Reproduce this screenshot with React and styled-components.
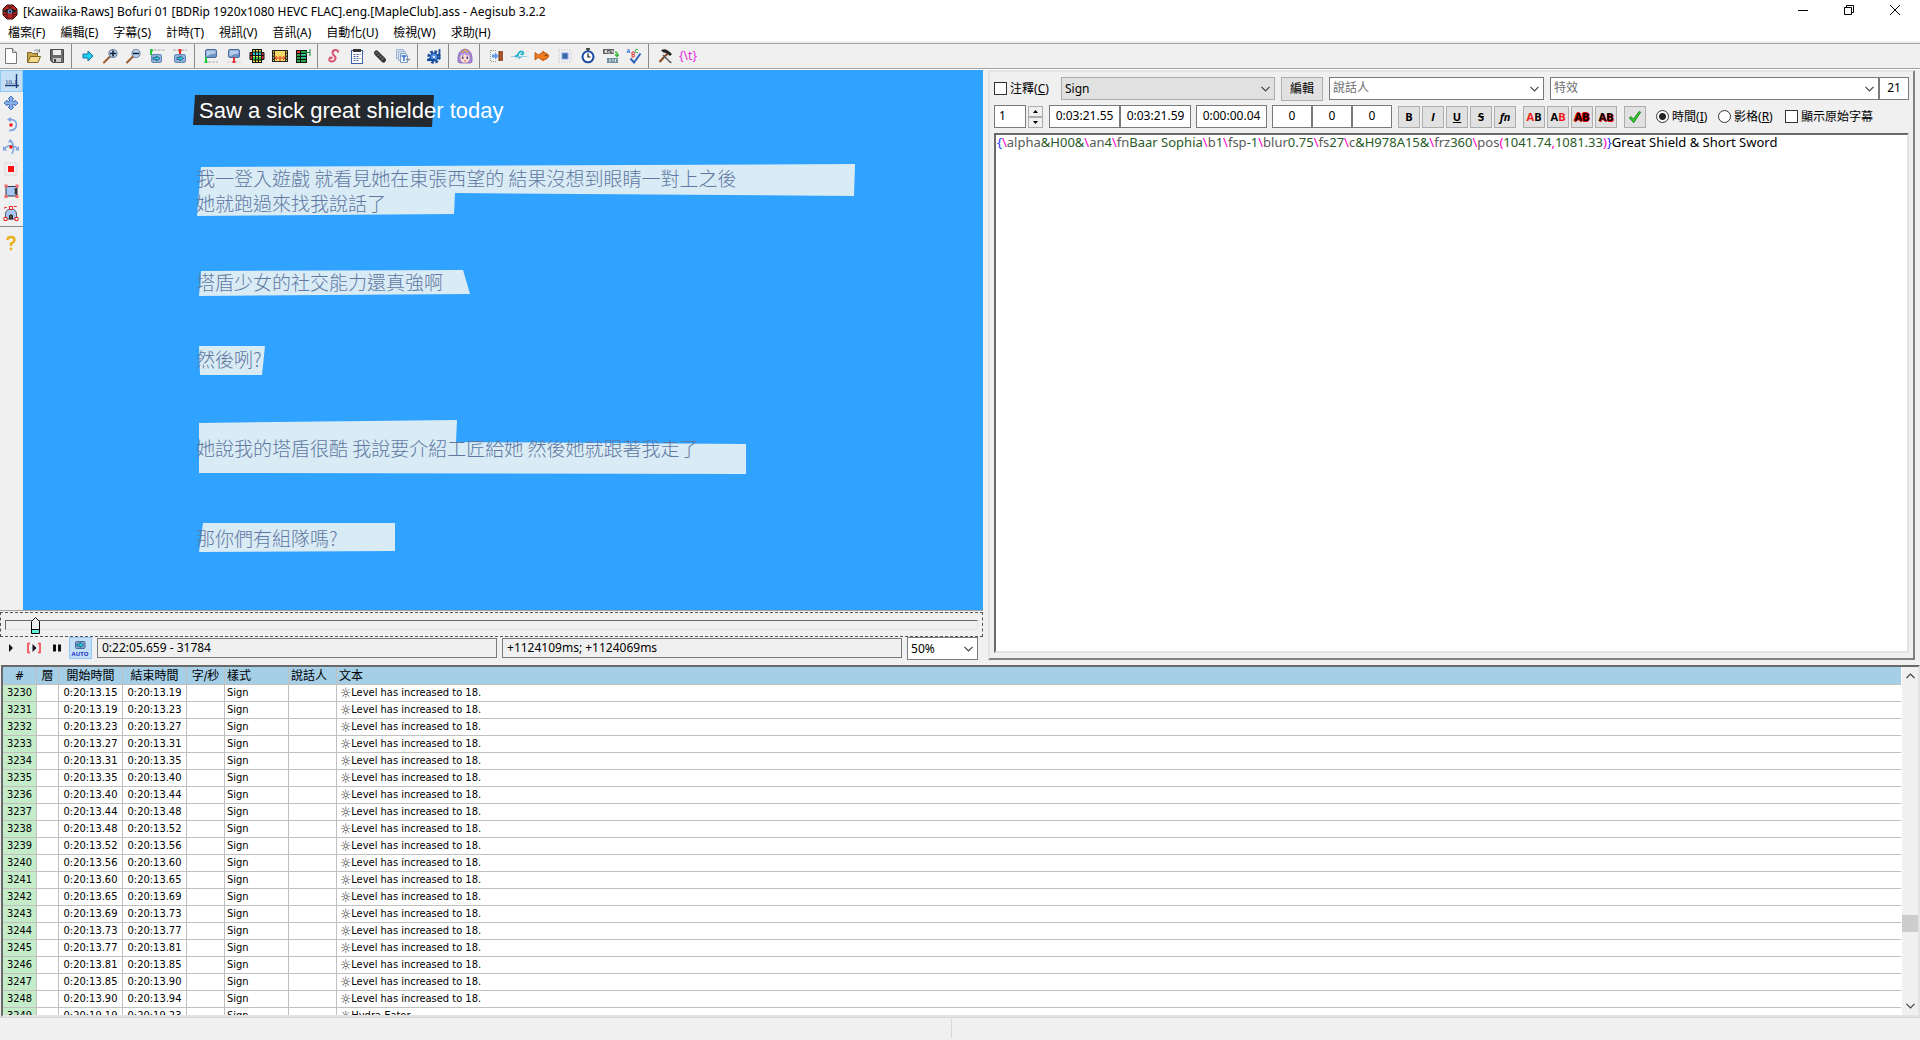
import React from "react";
import styled, { createGlobalStyle, css } from "styled-components";

const uiFont = `"Noto Sans", "Noto Sans CJK TC", sans-serif`;
const gridFont = `"DejaVu Sans Condensed", "DejaVu Sans", "Noto Sans CJK TC", sans-serif`;

const menus = ["檔案(F)", "編輯(E)", "字幕(S)", "計時(T)", "視訊(V)", "音訊(A)", "自動化(U)", "檢視(W)", "求助(H)"];

const mainTools = [
  ["new", "open", "save"],
  ["jump", "zoomIn", "zoomOut", "jumpStart", "jumpEnd"],
  ["videoStart", "videoEnd", "snapScene", "shiftFrame", "selectVisible"],
  ["styles", "properties", "attach", "fonts"],
  ["automation"],
  ["assistant"],
  ["shift", "wave", "fish", "resample", "timing", "kanji", "spell"],
  ["options", "tags"],
];

const visualTools = ["cross", "drag", "rotateZ", "rotateXY", "scale", "clip", "vectorClip"];

const times = [
  "13.15", "13.19", "13.23", "13.27", "13.31", "13.35", "13.40", "13.44", "13.48", "13.52",
  "13.56", "13.60", "13.65", "13.69", "13.73", "13.77", "13.81", "13.85", "13.90", "13.94",
];

const lines = times.slice(0, -1).map((t, i) => ({
  num: 3230 + i,
  start: `0:20:${t}`,
  end: `0:20:${times[i + 1]}`,
  style: "Sign",
  text: "Level has increased to 18.",
}));
lines.push({ num: 3249, start: "0:20:19.19", end: "0:20:19.23", style: "Sign", text: "Hydra Eater" });

const overrideTags = [
  ["brace", "{"],
  ["slash", "\\"], ["tag", "alpha"], ["arg", "&H00&"],
  ["slash", "\\"], ["tag", "an"], ["arg", "4"],
  ["slash", "\\"], ["tag", "fn"], ["arg", "Baar Sophia"],
  ["slash", "\\"], ["tag", "b"], ["arg", "1"],
  ["slash", "\\"], ["tag", "fsp"], ["arg", "-1"],
  ["slash", "\\"], ["tag", "blur"], ["arg", "0.75"],
  ["slash", "\\"], ["tag", "fs"], ["arg", "27"],
  ["slash", "\\"], ["tag", "c"], ["arg", "&H978A15&"],
  ["slash", "\\"], ["tag", "frz"], ["arg", "360"],
  ["slash", "\\"], ["tag", "pos"], ["slash", "("], ["arg", "1041.74"], ["slash", ","], ["arg", "1081.33"], ["slash", ")"],
  ["brace", "}"],
  ["plain", "Great Shield & Short Sword"],
];

const Screen = ({ x = 2, y = 3 }) => (
  <g>
    <rect x={x} y={y} width="11" height="8" rx="1.5" fill="#6f93c4" stroke="#456a9d" />
    <path d={`M${x + 1} ${y + 1}h9v3q-5 0-9 3z`} fill="#b5cdea" />
  </g>
);

const icons = {
  new: (
    <g>
      <path d="M2.5 .5h7l4 4v11h-11z" fill="#fff" stroke="#777" />
      <path d="M9.5 .5v4h4" fill="#ddd" stroke="#777" />
    </g>
  ),
  open: (
    <g>
      <path d="M1.5 14V4.5h4l1 1h5v3" fill="#c9a64b" stroke="#7d6626" />
      <path d="M1.5 14.5l3-6h10l-2.5 6z" fill="#f4db8c" stroke="#7d6626" />
      <path d="M8 3q3-3 5 0M13.500 1v3h-3" fill="none" stroke="#888" />
    </g>
  ),
  save: (
    <g>
      <path d="M1.500 1.500h13v13H3.500l-2-2z" fill="#6a6a6a" stroke="#4a4a4a" />
      <rect x="4" y="2" width="8" height="5" fill="#eee" />
      <rect x="4" y="10" width="8" height="4" fill="#ccc" />
      <rect x="5" y="11" width="2" height="3" fill="#444" />
    </g>
  ),
  jump: <path d="M3 6h5V3l5 5-5 5v-3H3z" fill="#1ad0f4" stroke="#1f6f9c" />,
  zoomIn: (
    <g>
      <path d="M1 14.500l6-6" stroke="#9c5b2c" strokeWidth="2" strokeLinecap="round" />
      <circle cx="10" cy="5.500" r="4" fill="#bcd6f8" stroke="#6b7f9f" strokeWidth="1.200" />
      <path d="M7 5.500h6M10 2.500v6" stroke="#123" strokeWidth="1.600" />
    </g>
  ),
  zoomOut: (
    <g>
      <path d="M1 14.500l6-6" stroke="#9c5b2c" strokeWidth="2" strokeLinecap="round" />
      <circle cx="10" cy="5.500" r="4" fill="#bcd6f8" stroke="#7986a0" strokeWidth="1.200" />
      <path d="M7 5.500h6" stroke="#123" strokeWidth="1.600" />
    </g>
  ),
  jumpStart: (
    <g>
      <path d="M4.500 2h11" stroke="#ccc" strokeWidth="2" strokeDasharray="3 1" />
      <path d="M2 1v6M1 2.500h3" stroke="#24c838" strokeWidth="2" />
      <rect x="2.500" y="6.500" width="10" height="8" rx="1.500" fill="#8fb2dd" stroke="#6688b4" />
      <path d="M4 9.500h3.500V8l3.500 2.500L7.500 13v-1.500H4z" fill="#1fd0e8" stroke="#235" strokeWidth=".6" />
    </g>
  ),
  jumpEnd: (
    <g>
      <path d="M1 2h14" stroke="#ccc" strokeWidth="2" strokeDasharray="3 1" />
      <path d="M8 1v6M6.500 2.500h3" stroke="#e22" strokeWidth="2" />
      <rect x="2.500" y="6.500" width="11" height="8" rx="1.500" fill="#8fb2dd" stroke="#6688b4" />
      <path d="M5 9.500h3V8l3.500 2.500L8 13v-1.500H5z" fill="#1fd0e8" stroke="#235" strokeWidth=".6" />
    </g>
  ),
  videoStart: (
    <g>
      <Screen x={2.5} y={1.5} />
      <path d="M5 14h10" stroke="#ccc" strokeWidth="2" strokeDasharray="3 1" />
      <path d="M3 9v6M1.500 14h3" stroke="#24c838" strokeWidth="2" />
    </g>
  ),
  videoEnd: (
    <g>
      <Screen x={2.5} y={1.5} />
      <path d="M1 14h14" stroke="#ccc" strokeWidth="1" strokeDasharray="3 1" />
      <path d="M8 9v5M6.500 14h3" stroke="#d33" strokeWidth="2" />
    </g>
  ),
  snapScene: (
    <g>
      <path d="M1 4.500h14v7H1z" fill="#d33" stroke="#111" />
      <rect x="3.500" y="1.500" width="9" height="13" fill="#e5e04a" stroke="#111" />
      <rect x="4" y="4" width="8" height="3" fill="#2dc4cf" />
      <rect x="4" y="9" width="8" height="3" fill="#38c24a" />
      <path d="M6.500 1v14M9.500 1v14M1 7.500h14M3 4h10M3 12h10" stroke="#111" />
    </g>
  ),
  shiftFrame: (
    <g>
      <rect x=".5" y="2.500" width="15" height="11" fill="#3a3122" stroke="#222" />
      <rect x="3" y="3" width="10" height="10" fill="#f5d76a" />
      <path d="M1.500 3v10M14.500 3v10" stroke="#e8c860" strokeDasharray="1.500 1.500" />
      <path d="M3 10h10M5 8l-2 2 2 2M11 8l2 2-2 2M8 8v5" stroke="#e03c1c" fill="none" />
    </g>
  ),
  selectVisible: (
    <g>
      <rect x="1.500" y="2.500" width="10" height="12" fill="#25a844" stroke="#111" />
      <path d="M2 5.500h10M2 8.500h10M2 11.500h10M5.500 3v12" stroke="#111" />
      <path d="M6 6.500h5M6 9.500h5" stroke="#2ad3c8" />
      <rect x="2" y="3" width="3" height="2" fill="#e33" />
      <path d="M15 1v7M12 3l-2 1.500L12 6M10 4.500h5" stroke="#16813a" fill="none" />
    </g>
  ),
  styles: (
    <path d="M12 4.500q.5-2.500-2.500-2.500-3 0-3 2.500 0 2 2 3.500 1.800 1.500.5 3.800-1.500 2.200-4 1.700-2.500-.8-1.500-3 1-1.500 3-.5" fill="none" stroke="#d8536f" strokeWidth="2" />
  ),
  properties: (
    <g>
      <rect x="2.500" y="2.500" width="11" height="13" fill="#fff" stroke="#3a62a8" />
      <rect x="4" y="1" width="8" height="3" fill="#333" />
      <path d="M4.500 6.500h7M4.500 8.500h6M4.500 10.500h7M4.500 12.500h5" stroke="#4668a0" strokeDasharray="2 1" />
    </g>
  ),
  attach: (
    <g>
      <path d="M4.500 5l7 7" stroke="#333" strokeWidth="5" strokeLinecap="round" />
      <path d="M3.500 6L6 3.500M5.500 8L8 5.500M7.500 10L10 7.500M9.500 12L12 9.500" stroke="#999" />
    </g>
  ),
  fonts: (
    <g>
      <path d="M1.500 1.500h7v9h-7z" fill="#dbe7f5" stroke="#9cb4d2" />
      <path d="M3.500 3.500h7v9h-7z" fill="#dbe7f5" stroke="#9cb4d2" />
      <path d="M5.500 5.500h5l2 2v7h-7z" fill="#edf4fc" stroke="#7c9cc2" />
      <path d="M6.500 8h5M9 8v5" stroke="#2f6fc4" strokeWidth="1.400" />
      <path d="M11 11.500h4" stroke="#888" strokeWidth="1.500" />
    </g>
  ),
  automation: (
    <g>
      <circle cx="8" cy="9" r="5" fill="none" stroke="#1b4f9e" strokeWidth="3.500" strokeDasharray="2.400 1.500" />
      <circle cx="8" cy="9" r="3.800" fill="#4b8be0" stroke="#1b4f9e" strokeWidth="1.200" />
      <path d="M13.500 1v9M1 12h8" stroke="#1b4f9e" strokeWidth="1.800" />
      <circle cx="8" cy="9" r="1.300" fill="#dce8fa" />
    </g>
  ),
  assistant: (
    <g>
      <path d="M1 14Q0 2 8 1q8 1 7 13l-2 1H3z" fill="#a98ad4" stroke="#7f62ac" strokeWidth=".8" />
      <ellipse cx="8" cy="10" rx="4.600" ry="4.800" fill="#fbe0d2" />
      <path d="M3 8q2-3 5-3.500Q12 5 13 8l-2-1-1 1-2-2-2 2-1-1z" fill="#b89ae0" />
      <path d="M4 3l2 1.500L8 1l2 3.500L12 3" fill="#f6c64c" stroke="#d0972a" strokeWidth=".6" />
      <path d="M5.700 8.500v2.500M10.300 8.500v2.500" stroke="#4f3c98" strokeWidth="1.500" />
      <path d="M7 13h2" stroke="#d5566a" />
    </g>
  ),
  shift: (
    <g>
      <path d="M2.500 2v12M8 2.500H2.500M8 13.500H2.500" stroke="#999" strokeDasharray="1 1" fill="none" />
      <path d="M4 6.500h3V4.500L10.500 8 7 11.500v-2H4z" fill="#5f9cec" />
      <rect x="11" y="3" width="4" height="10" fill="#a5552c" />
      <path d="M11 3v10" stroke="#6f3416" />
    </g>
  ),
  wave: (
    <g>
      <path d="M0 8.500h16" stroke="#8fd0e4" />
      <path d="M4 8.500q3-.5 3.500-3Q8.500 3 11 3.500q2 1 1 2.500-1.500 1-2-.5" fill="none" stroke="#1fb3c9" strokeWidth="1.800" />
      <path d="M6 9h5l-3 2z" fill="#58b8d8" />
    </g>
  ),
  fish: (
    <g>
      <path d="M1 4.500l3.500 2.500Q7 4 10 4.500q4 .5 5 3.500-2 4-6 4-3-.5-4.500-2.500L1 12z" fill="#ec7a1e" stroke="#b2500b" strokeWidth=".8" />
      <path d="M8 4l1-1.500 2 2M8 12l1 1.500 1.500-1.500" fill="#d65f10" />
      <circle cx="12" cy="7.500" r=".8" fill="#222" />
    </g>
  ),
  resample: (
    <g>
      <rect x="2" y="2" width="12" height="12" fill="none" stroke="#bbb" strokeDasharray="1 1.500" />
      <rect x="5" y="5" width="6" height="6" fill="#3f68a4" stroke="#7fa8e4" />
    </g>
  ),
  timing: (
    <g>
      <path d="M8 0v3M6 1h4" stroke="#333" strokeWidth="1.500" />
      <circle cx="8" cy="8.800" r="5.500" fill="#fff" stroke="#1c4a9c" strokeWidth="2" />
      <path d="M8 5.500V9h2.500" stroke="#111" strokeWidth="1.200" fill="none" />
    </g>
  ),
  kanji: (
    <g>
      <rect x="0" y="1" width="11" height="5" fill="#666" />
      <path d="M2 5l1-3 1 3M6 3v2.500M8 3h2v2" stroke="#fff" strokeWidth=".9" fill="none" />
      <rect x="4" y="10" width="11" height="5" fill="#70909f" />
      <path d="M7 11v3M9 12h2M13 11l-1 3" stroke="#fff" strokeWidth=".9" />
      <path d="M12 4q3 0 2 4M12 6.500l2 2 2-2" stroke="#35b934" strokeWidth="1.500" fill="none" />
    </g>
  ),
  spell: (
    <g>
      <path d="M1 5l1.500-4L4 5M1.500 4h2" stroke="#2a6fd8" fill="none" strokeWidth=".9" />
      <path d="M6 4v5h2q1.500-1.300 0-2.500H6h2q1-1.200 0-2.500z" stroke="#d22" fill="none" strokeWidth=".9" />
      <path d="M12 1.500q-3-1-3 1.500t3 1.500" stroke="#2fae3b" fill="none" strokeWidth=".9" />
      <path d="M4.500 10.500l3.500 4 6.500-9" stroke="#2c62b8" strokeWidth="2" fill="none" />
    </g>
  ),
  options: (
    <g>
      <path d="M2.500 14l8-8.500" stroke="#8a4a20" strokeWidth="2.200" />
      <path d="M4 2.500q4-2.500 7.500.5l3.500 3-2 2-3.500-3-3-.5z" fill="#222" />
      <path d="M6 7l6 6q1 1.500 2.500 1.500" stroke="#666" strokeWidth="1.600" fill="none" />
    </g>
  ),
  cross: (
    <g>
      <path d="M13.500 1v14M2 12.500h14" stroke="#1d3c78" strokeWidth="1.400" />
      <text x="2" y="11" fontSize="7" fontFamily="Liberation Serif, serif" fill="#1d3c78">10.1</text>
    </g>
  ),
  drag: (
    <path d="M8 1l3 3H9.500v2.500H12V5l3 3-3 3V9.500H9.500V12H11l-3 3-3-3h1.500V9.500H4V11L1 8l3-3v1.500h2.500V4H5z" fill="#86aeea" stroke="#4672bd" strokeWidth=".9" />
  ),
  rotateZ: (
    <g>
      <path d="M6 2.500q7.500-.5 7.500 5.500-1 6-7.500 5.500" fill="none" stroke="#7ba3dd" strokeWidth="1.600" />
      <path d="M8 0L4 2.500 8 5z" fill="#7ba3dd" />
      <rect x="6.500" y="6.500" width="3" height="3" fill="#e11" />
    </g>
  ),
  rotateXY: (
    <g>
      <path d="M1 10q7-7 14 0M7 1q6 6 2 14" fill="none" stroke="#7ba3dd" strokeWidth="1.500" />
      <path d="M0 7v4.500h4zM16 7v4.500h-4zM5 3.500L7 0l3 3z" fill="#7ba3dd" />
      <rect x="6.500" y="6.500" width="3" height="3" fill="#e11" />
    </g>
  ),
  scale: (
    <g>
      <rect x="2" y="2" width="12" height="12" fill="none" stroke="#bbb" strokeDasharray="1 1.500" />
      <rect x="5" y="5" width="6" height="6" fill="#f11" />
    </g>
  ),
  clip: (
    <g>
      <rect x="3" y="3.500" width="11" height="9.500" fill="#a8c8f4" stroke="#334" />
      <path d="M14 5q-4 0-2 3-1.500 3.500 2 4z" fill="#333" />
      <path d="M1.500 1.500h3v3h-3zM12.500 1.500h3v3h-3zM1.500 12h3v3h-3zM12.500 12h3v3h-3z" fill="#f26a6a" />
    </g>
  ),
  vectorClip: (
    <g>
      <path d="M2.500 14V9Q3 4 8 4t5.500 5v5z" fill="#a8c8f4" stroke="#556" />
      <path d="M6.500 14V10.500q1.500-1.500 3 0V14z" fill="#555" stroke="#222" />
      <path d="M1 3l6-1.500h8" fill="none" stroke="#e22" strokeDasharray="3 2" />
      <path d="M6.500 1.500h3v3h-3zM1 12.500h3v3H1zM12 12.500h3v3h-3z" fill="#fff" stroke="#e22" />
    </g>
  ),
  help: (
    <g>
      <path d="M4.500 5Q4.500 2 8 2t3.500 3Q11.500 7 8 8.500V11" fill="none" stroke="#e9b21c" strokeWidth="2.400" />
      <circle cx="8" cy="14" r="1.400" fill="#e9b21c" />
    </g>
  ),
  play: <path d="M6 4l4 4-4 4z" fill="#111" />,
  playLine: (
    <g>
      <path d="M4 3.500H2v9h2M12 3.500h2v9h-2" fill="none" stroke="#f4434a" strokeWidth="1.600" />
      <path d="M6.500 4l4 4-4 4z" fill="#111" />
    </g>
  ),
  pause: <path d="M4 4.500h3v7H4zM9 4.500h3v7H9z" fill="#111" />,
  auto: (
    <g>
      <rect x="3.500" y="1.500" width="9.500" height="7" rx="1" fill="#7fa3c8" stroke="#456a9d" />
      <path d="M5 4h3V2.500L11.500 5 8 7.500V6H5z" fill="#1fd0e8" stroke="#134" strokeWidth=".5" />
    </g>
  ),
  app: (
    <g>
      <path d="M5 1h6l4 4v6l-4 4H5l-4-4V5z" fill="#b02424" stroke="#3a0c0c" />
      <path d="M5 1l3 3 3-3M1 11l4-1v5M15 11l-4-1v5" stroke="#501010" fill="none" />
      <path d="M1 7q7-5 14 0-7 5-14 0z" fill="#222" />
      <circle cx="8" cy="7.500" r="2.200" fill="#6f9bd8" />
      <circle cx="8" cy="7.500" r="1" fill="#111" />
    </g>
  ),
  commit: <path d="M1.500 9l2-1.500L6 10.500 13 1.500l1.500 1L6.500 14.500z" fill="#2fd02f" stroke="#167a16" />,
};

const Icon = ({ name }) => {
  if (name === "tags") return <TagGlyph>{"{\\t}"}</TagGlyph>;
  return (
    <svg width="16" height="16" viewBox="0 0 16 16" aria-hidden="true">
      {icons[name]}
    </svg>
  );
};

const Chevron = ({ up }) => (
  <svg width="9" height="6" viewBox="0 0 9 6" aria-hidden="true">
    <path d={up ? "M.5 5l4-4 4 4" : "M.5 .8l4 4 4-4"} fill="none" stroke="#444" strokeWidth="1.200" />
  </svg>
);

const VideoFrame = () => (
  <Video viewBox="0 0 960 540" role="img" aria-label="video">
    <rect width="960" height="540" fill="#30a2ff" />
    <path d="M172 25L411 25 409 57 170 55z" fill="#24292f" />
    <g fill="#d9ebf5">
      <path d="M178 97L832 94 831 126 432 123 431 144 174 146z" />
      <path d="M178 201L440 200 447 224 176 226z" />
      <path d="M176 276L242 276 239 305 177 305z" />
      <path d="M176 353L434 350 433 372 723 374 723 404 176 403z" />
      <path d="M180 453L372 453 372 481 176 482z" />
    </g>
    <Caption x="176" y="48">Saw a sick great shielder today</Caption>
    <Chinese x="173" y="116">我一登入遊戲 就看見她在東張西望的 結果沒想到眼睛一對上之後</Chinese>
    <Chinese x="173" y="141">她就跑過來找我說話了</Chinese>
    <Chinese x="173" y="220">塔盾少女的社交能力還真強啊</Chinese>
    <Chinese x="173" y="297">然後咧?</Chinese>
    <Chinese x="173" y="386">她說我的塔盾很酷 我說要介紹工匠給她 然後她就跟著我走了</Chinese>
    <Chinese x="173" y="476">那你們有組隊嗎?</Chinese>
  </Video>
);

export default function App() {
  return (
    <Window>
      <GlobalStyle />
      <TitleBar>
        <Icon name="app" />
        <Title>[Kawaiika-Raws] Bofuri 01 [BDRip 1920x1080 HEVC FLAC].eng.[MapleClub].ass - Aegisub 3.2.2</Title>
        <WindowButton aria-label="Minimize">
          <svg width="10" height="10" viewBox="0 0 10 10"><path d="M0 5.500h10" stroke="#000" /></svg>
        </WindowButton>
        <WindowButton aria-label="Restore">
          <svg width="10" height="10" viewBox="0 0 10 10">
            <path d="M.5 2.500h7v7h-7zM2.500 2.500v-2h7v7h-2" fill="none" stroke="#000" />
          </svg>
        </WindowButton>
        <WindowButton aria-label="Close">
          <svg width="10" height="10" viewBox="0 0 10 10"><path d="M0 0l10 10M10 0L0 10" stroke="#000" /></svg>
        </WindowButton>
      </TitleBar>
      <MenuBar>
        {menus.map((m) => <MenuItem key={m}>{m}</MenuItem>)}
      </MenuBar>
      <Toolbar>
        {mainTools.map((group, i) => (
          <ToolGroup key={i}>
            {group.map((name) => (
              <ToolButton key={name} aria-label={name}><Icon name={name} /></ToolButton>
            ))}
          </ToolGroup>
        ))}
      </Toolbar>

      <Workspace>
        <VideoPane>
          <VideoRow>
            <VisualTools>
              {visualTools.map((name, i) => (
                <ToolButton key={name} aria-label={name} $active={i === 0}><Icon name={name} /></ToolButton>
              ))}
              <HelpSlot>
                <ToolButton aria-label="help"><Icon name="help" /></ToolButton>
              </HelpSlot>
            </VisualTools>
            <VideoFrame />
          </VideoRow>
          <SeekBox>
            <Seek type="range" min="0" max="1000" defaultValue="26" aria-label="frame" />
          </SeekBox>
          <PlayRow>
            <ToolButton aria-label="play"><Icon name="play" /></ToolButton>
            <ToolButton aria-label="play line"><Icon name="playLine" /></ToolButton>
            <ToolButton aria-label="pause"><Icon name="pause" /></ToolButton>
            <ToolButton $active>
              <Icon name="auto" />
              <AutoText>AUTO</AutoText>
            </ToolButton>
            <PlayInfo>
              <InfoBox readOnly aria-label="position" value="0:22:05.659 - 31784" />
              <InfoBox readOnly aria-label="offset" value="+1124109ms; +1124069ms" />
              <SelectWrap $width="71px">
                <Select aria-label="zoom"><option>50%</option></Select>
                <Chevron />
              </SelectWrap>
            </PlayInfo>
          </PlayRow>
        </VideoPane>

        <EditPanel>
          <EditRow $gap="6px">
            <Check $width="61px">
              <input type="checkbox" />
              <span>注釋(<u>C</u>)</span>
            </Check>
            <SelectWrap $width="214px" $gray>
              <Select aria-label="style"><option>Sign</option></Select>
              <Chevron />
            </SelectWrap>
            <EditButton>編輯</EditButton>
            <SelectWrap $width="215px">
              <ComboInput aria-label="actor" placeholder="說話人" />
              <Chevron />
            </SelectWrap>
            <Joined $grow>
              <SelectWrap $grow>
                <ComboInput aria-label="effect" placeholder="特效" />
                <Chevron />
              </SelectWrap>
              <Field $width="30px" aria-label="characters" defaultValue="21" />
            </Joined>
          </EditRow>
          <EditRow $gap="5px">
            <LayerBox>
              <Field $width="32px" $left aria-label="layer" defaultValue="1" />
              <Spinner>
                <SpinButton aria-label="up"><svg width="5" height="3"><path d="M0 3L2.500 0 5 3z" /></svg></SpinButton>
                <SpinButton aria-label="down"><svg width="5" height="3"><path d="M0 0h5L2.500 3z" /></svg></SpinButton>
              </Spinner>
            </LayerBox>
            <Joined>
              <Field $width="71px" aria-label="start" defaultValue="0:03:21.55" />
              <Field $width="71px" aria-label="end" defaultValue="0:03:21.59" />
            </Joined>
            <Field $width="71px" aria-label="duration" defaultValue="0:00:00.04" />
            <Joined>
              <Field $width="40px" aria-label="left margin" defaultValue="0" />
              <Field $width="40px" aria-label="right margin" defaultValue="0" />
              <Field $width="40px" aria-label="vertical margin" defaultValue="0" />
            </Joined>
            <ButtonSet>
              <FormatButton>B</FormatButton>
              <FormatButton $italic>I</FormatButton>
              <FormatButton $line="underline">U</FormatButton>
              <FormatButton $line="line-through">S</FormatButton>
              <FormatButton $italic>fn</FormatButton>
            </ButtonSet>
            <ButtonSet>
              <FormatButton><Red>A</Red>B</FormatButton>
              <FormatButton>A<Red>B</Red></FormatButton>
              <FormatButton $glow="outline">AB</FormatButton>
              <FormatButton $glow="shadow">AB</FormatButton>
            </ButtonSet>
            <ButtonSet>
              <FormatButton aria-label="commit">
                <svg width="14" height="14" viewBox="0 0 16 16">{icons.commit}</svg>
              </FormatButton>
            </ButtonSet>
            <ViewOptions>
              <Check $width="57px">
                <input type="radio" name="unit" defaultChecked />
                <span>時間(<u>I</u>)</span>
              </Check>
              <Check $width="62px">
                <input type="radio" name="unit" />
                <span>影格(<u>R</u>)</span>
              </Check>
              <Check>
                <input type="checkbox" />
                <span>顯示原始字幕</span>
              </Check>
            </ViewOptions>
          </EditRow>
          <Editor>
            <Highlight aria-hidden="true">
              {overrideTags.map(([kind, text], i) => <Token key={i} $kind={kind}>{text}</Token>)}
            </Highlight>
            <EditorInput aria-label="subtitle text" spellCheck="false" />
          </Editor>
        </EditPanel>
      </Workspace>

      <GridPane>
        <TableClip>
          <Table>
            <colgroup>
              <Col $width="34px" />
              <Col $width="22px" />
              <Col $width="64px" />
              <Col $width="64px" />
              <Col $width="38px" />
              <Col $width="64px" />
              <Col $width="48px" />
              <Col />
            </colgroup>
            <thead>
              <tr>
                <Th>#</Th>
                <Th>層</Th>
                <Th>開始時間</Th>
                <Th>結束時間</Th>
                <Th>字/秒</Th>
                <Th $left>樣式</Th>
                <Th $left>說話人</Th>
                <Th $left>文本</Th>
              </tr>
            </thead>
            <tbody>
              {lines.map((l) => (
                <tr key={l.num}>
                  <Td $number>{l.num}</Td>
                  <Td />
                  <Td>{l.start}</Td>
                  <Td>{l.end}</Td>
                  <Td />
                  <Td $left>{l.style}</Td>
                  <Td />
                  <Td $left>
                    <LineText><Tag>☼</Tag>{l.text}</LineText>
                  </Td>
                </tr>
              ))}
            </tbody>
          </Table>
        </TableClip>
        <ScrollBar>
          <ScrollButton aria-label="scroll up"><Chevron up /></ScrollButton>
          <ScrollTrack><ScrollThumb /></ScrollTrack>
          <ScrollButton aria-label="scroll down"><Chevron /></ScrollButton>
        </ScrollBar>
      </GridPane>

      <StatusBar>
        <StatusCell />
        <StatusCell />
      </StatusBar>
    </Window>
  );
}

const GlobalStyle = createGlobalStyle`
  * {
    box-sizing: border-box;
  }
  body {
    margin: 0;
    background: #f0f0f0;
  }
  button, input, select, textarea {
    font: inherit;
    color: inherit;
    margin: 0;
    border-radius: 0;
    outline: none;
  }
  svg {
    flex-shrink: 0;
  }
`;

const Window = styled.div`
  display: flex;
  flex-direction: column;
  height: 100vh;
  overflow: hidden;
  background: #f0f0f0;
  color: #000;
  font-family: ${uiFont};
  font-size: 12px;
  line-height: 16px;
`;

const TitleBar = styled.header`
  display: flex;
  align-items: center;
  height: 24px;
  padding: 0 2px;
  background: #fff;
`;

const Title = styled.span`
  flex: 1;
  padding-left: 5px;
  white-space: nowrap;
`;

const WindowButton = styled.button`
  display: flex;
  align-items: center;
  justify-content: center;
  width: 46px;
  height: 20px;
  padding: 0;
  align-self: flex-start;
  border: none;
  background: none;
`;

const MenuBar = styled.nav`
  display: flex;
  height: 19px;
  padding-left: 1px;
  background: #fff;
  border-bottom: 2px solid #f0f0f0;
`;

const MenuItem = styled.button`
  padding: 0 8px 0 7px;
  border: none;
  background: none;
  white-space: nowrap;
`;

const Toolbar = styled.div`
  display: flex;
  height: 26px;
  border-top: 1px solid #a0a0a0;
  border-bottom: 1px solid #a0a0a0;
`;

const ToolGroup = styled.div`
  display: flex;

  & + & {
    margin-left: 2px;
    padding-left: 5px;
    border-left: 1px solid #8a8a8a;
  }
`;

const ToolButton = styled.button`
  display: flex;
  flex-direction: column;
  align-items: center;
  justify-content: center;
  width: 23px;
  min-height: 22px;
  flex-shrink: 0;
  padding: 0 1px 0 0;
  position: relative;
  border: 1px solid ${(props) => (props.$active ? "#90c8f6" : "transparent")};
  background: ${(props) => (props.$active ? "#c4dff5" : "none")};
`;

const TagGlyph = styled.span`
  color: #e02ee0;
  font-size: 12px;
  line-height: 16px;
`;

const Workspace = styled.main`
  display: grid;
  grid-template-columns: 51.2% 1fr;
  border-top: 1px solid #fff;
`;

const VideoPane = styled.section`
  padding-bottom: 5px;
`;

const VideoRow = styled.div`
  display: flex;
  border-bottom: 1px solid #a0a0a0;
`;

const VisualTools = styled.div`
  display: flex;
  flex-direction: column;
  width: 23px;
`;

const HelpSlot = styled.div`
  margin-top: 2px;
  padding-top: 5px;
  border-top: 1px solid #8a8a8a;
`;

const Video = styled.svg`
  flex: 1;
  min-width: 0;
  aspect-ratio: 16 / 9;
`;

const Caption = styled.text`
  font-family: "Liberation Sans", Arial, sans-serif;
  font-size: 22px;
  fill: #fff;
`;

const Chinese = styled.text`
  font-family: "Noto Sans CJK TC", sans-serif;
  font-size: 19px;
  font-weight: 300;
  fill: #5f78a2;
`;

const SeekBox = styled.div`
  display: flex;
  align-items: center;
  height: 25px;
  margin-top: 1px;
  padding: 0 4px;
  border: 1px dashed #555;
`;

const Seek = styled.input`
  appearance: none;
  width: 100%;
  height: 18px;
  background: none;

  &::-webkit-slider-runnable-track {
    height: 10px;
    border: 1px solid;
    border-color: #696969 #e3e3e3 #e3e3e3 #696969;
  }

  &::-webkit-slider-thumb {
    appearance: none;
    width: 9px;
    height: 17px;
    margin-top: -4px;
    background: url("data:image/svg+xml,%3Csvg xmlns='http://www.w3.org/2000/svg' viewBox='0 0 9 17'%3E%3Cpath d='M.5 16.500V4.500L4.500 .5l4 4v12z' fill='%23f0f0f0' stroke='%23000'/%3E%3Cpath d='M1 12.500h7v3.500H1z' fill='%2360f0d8'/%3E%3Cpath d='M1 12.500h7' stroke='%23000'/%3E%3C/svg%3E");
  }
`;

const PlayRow = styled.div`
  display: flex;
  align-items: flex-start;
  height: 23px;
`;

const AutoText = styled.span`
  position: absolute;
  bottom: 0;
  font-size: 6px;
  font-weight: 700;
  line-height: 8px;
  color: #2233cc;
`;

const PlayInfo = styled.div`
  display: flex;
  flex: 1;
  gap: 5px;
  padding: 0 5px;
`;

const InfoBox = styled.input`
  flex: 1;
  min-width: 0;
  height: 20px;
  margin-top: 1px;
  padding: 0 4px 2px;
  border: 1px solid #7a7a7a;
  background: #f0f0f0;
`;

const EditPanel = styled.section`
  display: flex;
  flex-direction: column;
  gap: 5px;
  margin: 0 5px 5px;
  padding: 5px 4px;
  border: 2px solid;
  border-color: #e3e3e3 #808080 #808080 #e3e3e3;
`;

const EditRow = styled.div`
  display: flex;
  align-items: center;
  height: 23px;
  gap: ${(props) => props.$gap};
`;

const Joined = styled.div`
  display: flex;
  flex: ${(props) => (props.$grow ? 1 : "none")};
`;

const ViewOptions = styled.div`
  display: flex;
  gap: 5px;
  margin-left: 5px;
`;

const Check = styled.label`
  display: flex;
  align-items: center;
  gap: 3px;
  width: ${(props) => props.$width || "auto"};
  white-space: nowrap;

  input {
    appearance: none;
    width: 13px;
    height: 13px;
    flex-shrink: 0;
    border: 1px solid #333;
    background: #fff;
  }

  input[type="radio"] {
    border-radius: 50%;
  }

  input[type="radio"]:checked {
    background: radial-gradient(circle, #222 3px, #fff 4px);
  }
`;

const SelectWrap = styled.div`
  display: flex;
  align-items: center;
  width: ${(props) => props.$width || "auto"};
  flex: ${(props) => (props.$grow ? 1 : "none")};
  height: 23px;
  padding-right: 4px;
  border: 1px solid ${(props) => (props.$gray ? "#adadad" : "#7a7a7a")};
  background: ${(props) => (props.$gray ? "#e1e1e1" : "#fff")};
`;

const Select = styled.select`
  appearance: none;
  flex: 1;
  min-width: 0;
  padding: 0 3px;
  border: none;
  background: none;
`;

const ComboInput = styled.input`
  flex: 1;
  min-width: 0;
  padding: 0 3px 2px;
  border: none;
  background: none;

  &::placeholder {
    color: #6d6d6d;
  }
`;

const EditButton = styled.button`
  width: 42px;
  height: 24px;
  padding: 0;
  border: 1px solid #adadad;
  background: #e1e1e1;
`;

const Field = styled.input`
  width: ${(props) => props.$width};
  height: 23px;
  padding: 0 4px 2px;
  border: 1px solid #7a7a7a;
  background: #fff;
  text-align: ${(props) => (props.$left ? "left" : "center")};
`;

const LayerBox = styled.div`
  display: flex;
  align-items: center;
  gap: 2px;
  width: 50px;
`;

const Spinner = styled.div`
  display: flex;
  flex-direction: column;
`;

const SpinButton = styled.button`
  display: flex;
  align-items: center;
  justify-content: center;
  width: 15px;
  height: 11px;
  padding: 0;
  border: 1px solid #adadad;
  background: #f0f0f0;
`;

const ButtonSet = styled.div`
  display: flex;
  gap: 2px;
  margin-left: 1px;

  & + & {
    margin-left: 2px;
  }
`;

const FormatButton = styled.button`
  display: flex;
  align-items: center;
  justify-content: center;
  width: 22px;
  height: 22px;
  padding: 0;
  border: 1px solid #adadad;
  background: #e1e1e1;
  font-family: "Open Sans", sans-serif;
  font-size: 11px;
  font-weight: 700;
  font-style: ${(props) => (props.$italic ? "italic" : "normal")};
  text-decoration: ${(props) => props.$line || "none"};
  ${(props) => props.$glow === "outline" && css`
    text-shadow: 1px 0 #e00, -1px 0 #e00, 0 1px #e00, 0 -1px #e00;
  `}
  ${(props) => props.$glow === "shadow" && css`
    text-shadow: 1px 1px #e00;
  `}
`;

const Red = styled.span`
  color: #f01818;
`;

const Editor = styled.div`
  display: grid;
  flex: 1;
  border: 2px solid;
  border-color: #696969 #e3e3e3 #e3e3e3 #696969;
  background: #fff;
  font-size: 13px;
  line-height: 15px;
`;

const Highlight = styled.div`
  grid-area: 1 / 1;
  padding: 0 1px;
  white-space: pre-wrap;
`;

const EditorInput = styled.textarea`
  grid-area: 1 / 1;
  padding: 0 1px;
  border: none;
  background: none;
  resize: none;
`;

const tokenColors = {
  brace: "#1432ff",
  slash: "#ff00c8",
  tag: "#5a5a5a",
  arg: "#285a28",
  plain: "#000",
};

const Token = styled.span`
  color: ${(props) => tokenColors[props.$kind]};
`;

const GridPane = styled.section`
  display: flex;
  flex: 1;
  min-height: 0;
  margin-left: 1px;
  border: 2px solid;
  border-color: #696969 #e3e3e3 #e3e3e3 #696969;
  background: #fff;
`;

const TableClip = styled.div`
  flex: 1;
  overflow: hidden;
`;

const Table = styled.table`
  width: 100%;
  table-layout: fixed;
  border-collapse: separate;
  border-spacing: 0;
  font-family: ${gridFont};
  font-size: 11px;
  line-height: 16px;
`;

const Col = styled.col`
  width: ${(props) => props.$width || "auto"};
`;

const Th = styled.th`
  height: 18px;
  padding: ${(props) => (props.$left ? "0 2px" : "0")};
  border-right: 1px solid #c0c0c0;
  border-bottom: 1px solid #c0c0c0;
  background: #a5cee7;
  font-size: 12px;
  font-weight: 400;
  text-align: ${(props) => (props.$left ? "left" : "center")};
  white-space: nowrap;

  &:last-child {
    border-right: none;
  }
`;

const Td = styled.td`
  height: 17px;
  padding: ${(props) => (props.$left ? "0 2px" : "0")};
  border-right: 1px solid #c0c0c0;
  border-bottom: 1px solid #c0c0c0;
  background: ${(props) => (props.$number ? "#c4ecc9" : "#fff")};
  text-align: ${(props) => (props.$left ? "left" : "center")};
  white-space: nowrap;

  &:last-child {
    border-right: none;
  }
`;

const LineText = styled.div`
  display: flex;
  height: 16px;
  padding-left: 1px;
`;

const Tag = styled.span`
  font-size: 14px;
  color: #333;
`;

const ScrollBar = styled.div`
  display: flex;
  flex-direction: column;
  width: 16px;
  margin-left: 1px;
  background: #f0f0f0;
`;

const ScrollButton = styled.button`
  display: flex;
  align-items: center;
  justify-content: center;
  height: 18px;
  padding: 0;
  border: none;
  background: none;
`;

const ScrollTrack = styled.div`
  display: flex;
  flex-direction: column;
  flex: 1;

  &::before {
    content: "";
    flex: 230;
  }

  &::after {
    content: "";
    flex: 65;
  }
`;

const ScrollThumb = styled.div`
  height: 17px;
  background: #cdcdcd;
`;

const StatusBar = styled.footer`
  display: flex;
  height: 23px;
  padding: 1px 18px 2px 0;
  border-top: 1px solid #d7d7d7;
`;

const StatusCell = styled.div`
  flex: 1;

  & + & {
    border-left: 1px solid #d7d7d7;
  }
`;
